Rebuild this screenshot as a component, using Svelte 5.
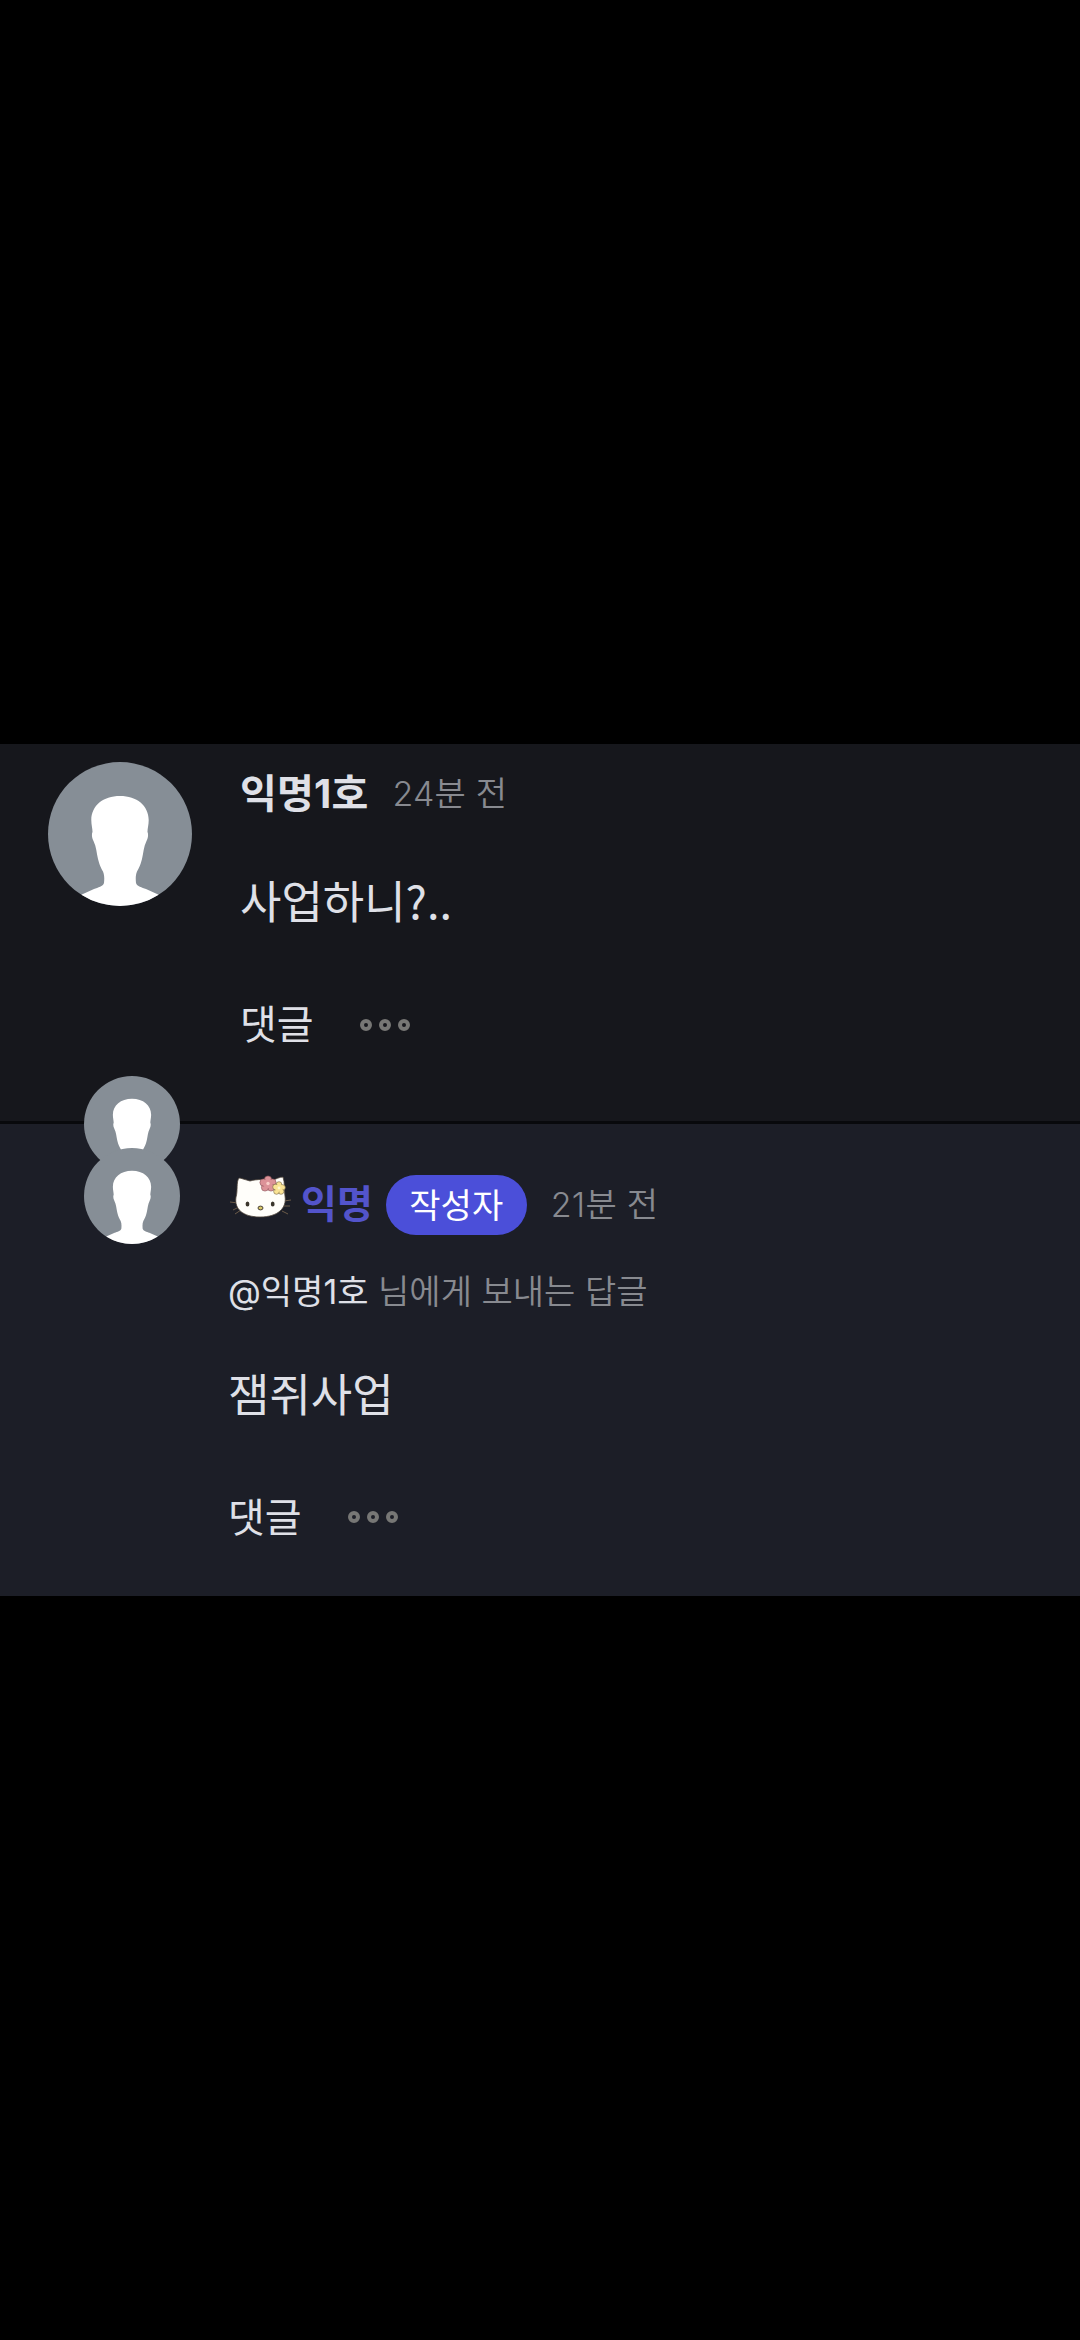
<script lang="ts">
    interface Comment
    {
        id: number;
        author: string;
        time: string;
        text: string;
        isReply: boolean;
        isWriter?: boolean;
        replyTo?: string;
    }

    const comments: Comment[] = [
        { id: 1, author: '익명1호', time: '24분 전', text: '사업하니?..', isReply: false },
        { id: 2, author: '익명', time: '21분 전', text: '잼쥐사업', isReply: true, isWriter: true, replyTo: '@익명1호' }
    ];
</script>

{#snippet avatar()}
    <svg class="avatar" viewBox="0 0 144 144" aria-hidden="true">
        <circle cx="72" cy="72" r="72" fill="#868e96" />
        <path
            fill="#fff"
            d="M72 34C55 34 43.5 43.500 43.300 58C43.300 63 44.600 67 44.500 70C43.500 72 43.800 76 45.500 79C48.500 85 48.500 91 50 97C51.500 103 53 106 55 109.500C56.500 113 56.400 117 56 121C55 124.500 50 125.500 46 127L33.300 132.700A72 72 0 0 0 110.700 132.700L98 127C94 125.500 89 124.500 88 121C87.600 117 87.500 113 89 109.500C91 106 92.500 103 94 97C95.500 91 95.500 85 98.500 79C100.200 76 100.500 72 99.500 70C99.400 67 100.700 63 100.700 58C100.500 43.500 89 34 72 34Z"
        />
    </svg>
{/snippet}

{#snippet kitty()}
    <svg class="kitty" viewBox="0 0 64 54" aria-hidden="true">
        <g fill="none" stroke="#6b5a48" stroke-width="1">
            <path d="M1 33l8 1M4 41l6-3M6 45l6-4M55 32l7-1M55 37l6 0M53 42l6 3" />
        </g>
        <path
            fill="#fffefa"
            stroke="#4a4036"
            stroke-width="0.800"
            d="M10 9C12 9 17 11 21 12C28 10 37 10 43 12C46 10 51 8 54 8C56 14 55 20 56 27C58 39 49 48 31 48C14 48 5 40 7 28C9 22 7 13 10 9Z"
        />
        <ellipse cx="18.500" cy="35" rx="1.900" ry="2.500" fill="#3b362c" />
        <ellipse cx="43.700" cy="35" rx="1.900" ry="2.500" fill="#3b362c" />
        <ellipse cx="31.500" cy="39" rx="2.500" ry="1.900" fill="#d9c968" stroke="#4a4036" />
        <g fill="#dc9298" stroke="#885158" stroke-width="0.600">
            <circle cx="39" cy="10.500" r="3.600" />
            <circle cx="43.500" cy="13.500" r="3.600" />
            <circle cx="42" cy="18.500" r="3.600" />
            <circle cx="36" cy="18.500" r="3.600" />
            <circle cx="34.500" cy="13.500" r="3.600" />
        </g>
        <circle cx="39" cy="14.500" r="4.800" fill="#dc9298" />
        <circle cx="39" cy="14.500" r="1.700" fill="#f8ccc7" />
        <g fill="#fae394" stroke="#766442" stroke-width="0.600">
            <circle cx="50" cy="15.500" r="2.800" />
            <circle cx="53.500" cy="18.500" r="2.800" />
            <circle cx="52" cy="22.500" r="2.800" />
            <circle cx="47.500" cy="22.500" r="2.800" />
            <circle cx="46.500" cy="18" r="2.800" />
        </g>
        <circle cx="50" cy="19" r="3.800" fill="#fae394" />
        <circle cx="50" cy="19" r="1.400" fill="#fff6ce" />
    </svg>
{/snippet}

<main class="screen">
    {#each comments as comment (comment.id)}
        <article class="comment" class:reply={comment.isReply}>
            <div class="avatars">
                {@render avatar()}
                {#if comment.isReply}
                    {@render avatar()}
                {/if}
            </div>

            <div class="body">
                <header class="head">
                    {#if comment.isWriter}
                        {@render kitty()}
                    {/if}
                    <strong class="author">{comment.author}</strong>
                    {#if comment.isWriter}
                        <span class="badge">작성자</span>
                    {/if}
                    <time class="time">{comment.time}</time>
                </header>

                {#if comment.replyTo}
                    <p class="target"><span class="mention">{comment.replyTo}</span> 님에게 보내는 답글</p>
                {/if}

                <p class="text">{comment.text}</p>

                <footer class="actions">
                    <button type="button" class="answer">댓글</button>
                    <button type="button" class="more" aria-label="더보기">
                        <i></i><i></i><i></i>
                    </button>
                </footer>
            </div>
        </article>
    {/each}
</main>

<style>
    :global(body)
    {
        margin: 0;
        background: #000;
    }

    .screen
    {
        width: 1080px;
        height: 2340px;
        box-sizing: border-box;
        padding-top: 744px;
        overflow: hidden;
        background: #000;
        color: #dfe0e7;
        font-family: 'Noto Sans CJK KR', sans-serif;
    }

    .comment
    {
        display: flex;
        align-items: flex-start;
        height: 377px;
        box-sizing: border-box;
        padding: 17.5px 0 0 48px;
        background: #16171c;
    }

    .comment.reply
    {
        height: 475px;
        padding: 0 0 0 84px;
        border-top: 3px solid #08090c;
        background: #1c1e27;
    }

    .avatars
    {
        display: flex;
        flex-direction: column;
        flex: none;
        width: 192px;
    }

    .avatar
    {
        display: block;
        width: 144px;
        height: 144px;
    }

    .reply .avatars
    {
        width: 144px;
        margin-top: -48px;
    }

    .reply .avatar
    {
        width: 96px;
        height: 96px;
    }

    .reply .avatar + .avatar
    {
        margin-top: -24px;
    }

    .body
    {
        display: flex;
        flex-direction: column;
        padding-top: 2px;
        white-space: nowrap;
    }

    .reply .body
    {
        padding-top: 51px;
    }

    .head
    {
        display: flex;
        align-items: center;
        height: 60px;
    }

    .kitty
    {
        width: 64px;
        height: 54px;
        margin: -18px 8px 0 1px;
    }

    .author,
    .time,
    .target
    {
        font-family: Inter, 'Noto Sans CJK KR', sans-serif;
    }

    .author
    {
        font-size: 40px;
        font-weight: 700;
        line-height: 60px;
        letter-spacing: 0.2px;
    }

    .reply .author
    {
        margin-top: -2px;
        color: #5354cb;
        font-size: 39px;
        letter-spacing: 0;
    }

    .badge
    {
        width: 141px;
        height: 60px;
        margin-left: 13px;
        border-radius: 30px;
        background: #4b4fd9;
        color: #fff;
        font-size: 34px;
        line-height: 58px;
        text-align: center;
    }

    .time
    {
        margin-left: 24px;
        color: #888a90;
        font-size: 34px;
        font-weight: 350;
        line-height: 60px;
        letter-spacing: 0.2px;
    }

    .target
    {
        height: 60px;
        margin: 27px 0 0;
        color: #888a90;
        font-size: 34px;
        font-weight: 350;
        line-height: 60px;
    }

    .mention
    {
        color: #dfe0e7;
        font-weight: 400;
    }

    .text
    {
        height: 66px;
        margin: 43px 0 0;
        font-size: 45px;
        line-height: 66px;
    }

    .reply .text
    {
        margin-top: 38px;
    }

    .actions
    {
        display: flex;
        align-items: center;
        height: 60px;
        margin-top: 62px;
    }

    .reply .actions
    {
        margin-top: 61px;
    }

    button
    {
        padding: 0;
        border: 0;
        background: none;
        color: inherit;
        font: inherit;
    }

    .answer
    {
        margin-top: -5px;
        font-size: 40px;
        line-height: 60px;
    }

    .more
    {
        display: flex;
        gap: 6.8px;
        margin-left: 46.5px;
    }

    .more i
    {
        width: 12px;
        height: 12px;
        box-sizing: border-box;
        border: 4px solid #777775;
        border-radius: 50%;
    }
</style>
